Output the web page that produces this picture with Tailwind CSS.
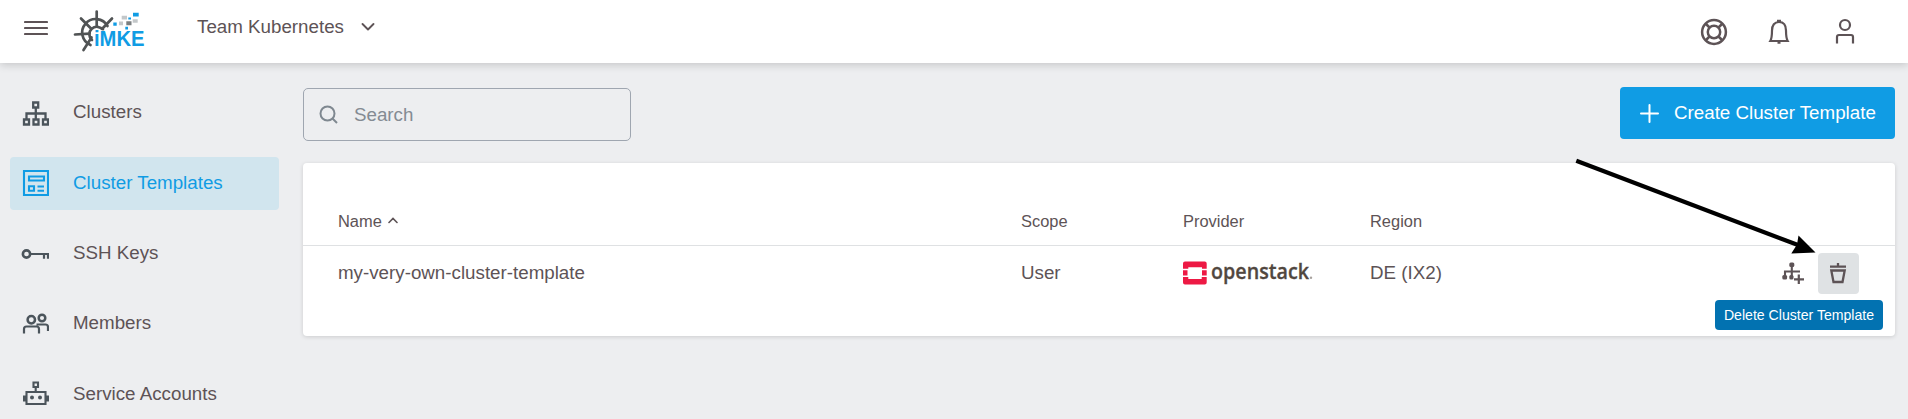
<!DOCTYPE html>
<html lang="en">
<head>
<meta charset="utf-8">
<title>Cluster Templates</title>
<script src="https://cdn.jsdelivr.net/npm/@tailwindcss/browser@4"></script>
</head>
<body class="relative h-[419px] overflow-hidden bg-[#edeef0] font-['Liberation_Sans',Arial,sans-serif] text-[18.75px] leading-[22px] text-[#5d5356]">
<header class="relative flex h-[63px] items-center bg-white shadow-[0_2px_8px_rgba(0,0,0,0.17)]">
  <button class="ml-6 h-[16px] w-6 -translate-y-[2px]" aria-label="Menu">
    <svg class="block -mt-[3px]" width="24" height="16" viewBox="0 0 24 16" stroke="#5d5356" stroke-width="2.200" stroke-linecap="round"><path d="M1 2h22M1 8h22M1 14h22"/></svg>
  </button>
  <svg class="ml-[22px] -translate-y-[1.500px]" width="80" height="60" viewBox="70 0 80 60" fill="none">
    <g stroke="#505354" stroke-width="2.700" stroke-linecap="round">
      <path d="M107.500 25.500A13.500 13.500 0 1 0 90.500 44.500"/>
      <path d="M103 29.500A7.500 7.500 0 1 0 92 39.500"/>
      <path d="M96.700 11v14.500M81 18l10 10M112 18l-9.500 10M75 34l14.500-.8M83.500 49.500l8-12.500"/>
    </g>
    <g fill="#109ce4"><path d="M133 12.300h5.700V16H133zM128.300 17h2.700v2h-2.700zM113.300 22h3.400v3.300h-3.400zM125.300 26.300h2.700V29h-2.700z"/></g>
    <path fill="#c3c7c9" d="M121.700 15.300h5.300V19h-5.300zM132.700 18.700h5v3.600h-5zM119 21h4v3.700h-4z"/>
    <path fill="#7b7f81" d="M126.300 20.700h5.200v4h-5.200z"/>
    <text x="94" y="45.800" fill="#109ce4" stroke="#fff" stroke-width="1.200" paint-order="stroke" font-family="Liberation Sans, sans-serif" font-weight="700" font-size="21.500" textLength="50.500" lengthAdjust="spacingAndGlyphs">iMKE</text>
  </svg>
  <button class="ml-[47px] flex -translate-y-[5px] items-center gap-[18px]">
    <span>Team Kubernetes</span>
    <svg class="-ml-px" width="14" height="9" viewBox="0 0 14 9" fill="none" stroke="#5d5356" stroke-width="1.900" stroke-linecap="round" stroke-linejoin="round"><path d="M1.500 2L7 7.500L12.500 2"/></svg>
  </button>
  <div class="mr-[51px] ml-auto flex items-center gap-[39px]">
    <svg width="28" height="28" viewBox="0 0 28 28" fill="none" stroke="#5d5356" stroke-width="2.500"><circle cx="14" cy="14" r="11.900"/><circle cx="14" cy="14" r="6.200"/><path d="M5.500 5.500l4 4M22.500 5.500l-4 4M5.500 22.500l4-4M22.500 22.500l-4-4"/></svg>
    <svg width="24" height="28" viewBox="0 0 24 28" fill="none" stroke="#5d5356" stroke-width="2.200"><path d="M3.300 23Q5 20 5 12.500C5 7 7.500 4 12 4s7 3 7 8.500Q19 20 20.700 23z"/><path d="M10 3h4M10.500 24.500h3" stroke-width="2.500"/></svg>
    <svg class="ml-[3px] -mt-[2px]" width="24" height="28" viewBox="0 0 24 28" fill="none" stroke="#5d5356" stroke-width="2.200"><circle cx="12" cy="8" r="5"/><path d="M4 26.500V20q0-2 2-2h12q2 0 2 2v6.500"/></svg>
  </div>
</header>

<div class="flex">
  <nav class="flex w-[279px] shrink-0 flex-col gap-[17.500px] pt-[23px] pl-[10px] text-[#5d5356]">
    <a class="flex h-[53px] items-center gap-[24px] pl-[12px]">
      <svg width="28" height="28" viewBox="0 0 28 28" class="mt-[2px] ml-[-1px]" fill="none" stroke="#4b545b" stroke-width="2.300"><path d="M12.200 2.500h5v5h-5zM3 19.500h5v5H3zM12.500 19.500h5v5h-5zM22 19.500h5v5h-5zM14.800 8v11M5.500 19v-5.500h19V19"/></svg>
      <span class="-translate-y-px">Clusters</span>
    </a>
    <a class="flex h-[53px] items-center gap-[24px] rounded-[4px] bg-[#d1e5ee] pl-[12px] text-[#109ce4]">
      <svg width="28" height="28" viewBox="0 0 28 28" class="ml-[-1px]" fill="none" stroke="#109ce4" stroke-width="2.100"><path d="M3 2h24v24H3z"/><path d="M8 7.500h15v4H8zM8 17.200h5v4.600H8zM16.500 17.500H23M16.500 21.800H23"/></svg>
      <span>Cluster Templates</span>
    </a>
    <a class="flex h-[53px] items-center gap-[24px] pl-[12px]">
      <svg width="28" height="28" viewBox="0 0 28 28" class="ml-[-1px]" fill="none" stroke="#4b545b" stroke-width="2.200"><circle cx="5.500" cy="14" r="3.600" stroke-width="2.600"/><path d="M9.500 14H28M27 14v4.800M23 14v4.800"/></svg>
      <span class="-translate-y-px">SSH Keys</span>
    </a>
    <a class="flex h-[53px] items-center gap-[24px] pl-[12px]">
      <svg width="28" height="28" viewBox="0 0 28 28" class="-mt-px ml-[-1px]" fill="none" stroke="#4b545b" stroke-width="2.500"><circle cx="10.300" cy="9.700" r="3.700"/><circle cx="21" cy="8" r="3.300"/><path d="M3 23.500V19q0-2.500 2.500-2.500h10q2.500 0 2.500 2.500v4.500M15.500 14.500h9q2.500 0 2.500 2.500v4" stroke-width="2.200"/></svg>
      <span class="-translate-y-px">Members</span>
    </a>
    <a class="flex h-[53px] items-center gap-[24px] pl-[12px]">
      <svg width="28" height="28" viewBox="0 0 28 28" class="-mt-px ml-[-1px]" fill="none" stroke="#4b545b" stroke-width="2.100"><path d="M12.500 2.500h4.500v4.500h-4.500zM14.700 7v5M5.500 12h19v12h-19z"/><path d="M3.500 15.500v6M26.500 15.500v6" stroke-width="3"/><g fill="#4b545b" stroke="none"><circle cx="11" cy="17.500" r="2"/><circle cx="19" cy="17.500" r="2"/></g></svg>
      <span class="-translate-y-px">Service Accounts</span>
    </a>
  </nav>

  <main class="relative ml-[24px] w-[1592px] pt-[24px]">
    <div class="flex items-start justify-between">
      <label class="mt-[1px] flex h-[53px] w-[328px] items-center gap-[16px] rounded-[5px] border border-[#9fa6b0] pl-[15px] text-[#848b93]">
        <svg width="19" height="19" viewBox="0 0 19 19" fill="none" stroke="#7f8890" stroke-width="2"><circle cx="8.500" cy="8.500" r="7"/><path d="M13.500 13.500l4.500 4.500"/></svg>
        <span>Search</span>
      </label>
      <button class="flex h-[52px] w-[275px] items-center gap-[15px] rounded-[4px] bg-[#109ce4] pl-[20px] text-white">
        <svg width="19" height="19" viewBox="0 0 19 19" stroke="#fff" stroke-width="2" stroke-linecap="round"><path d="M9.500 1v17M1 9.500h17"/></svg>
        <span>Create Cluster Template</span>
      </button>
    </div>

    <section class="mt-[22px] h-[173px] rounded-[4px] bg-white shadow-[0_1px_4px_rgba(0,0,0,0.14)]">
      <div class="grid h-[83px] grid-cols-[683px_162px_187px_1fr] items-start border-b border-[#dfe1e3] pt-[47px] pl-[35px] text-[16.450px]">
        <span class="flex h-[22px] items-center gap-[6px]">Name
          <svg class="-mt-px" width="10" height="7" viewBox="0 0 10 7" fill="none" stroke="#5d5356" stroke-width="1.600" stroke-linecap="round"><path d="M1 5.500l4-4 4 4"/></svg>
        </span>
        <span>Scope</span><span>Provider</span><span>Region</span>
      </div>
      <div class="grid h-[54px] grid-cols-[683px_162px_187px_1fr] items-center pl-[35px]">
        <span>my-very-own-cluster-template</span>
        <span>User</span>
        <svg width="131" height="30" viewBox="0 0 131 30">
          <path fill="#ed1944" d="M2 3.500h19.700q2 0 2 2v5.300h-4.700V9.300H5.300v1.500H0V5.500q0-2 2-2zM0 12.300h4.500v5.200H0zM19 12.300h4.700v5.200H19zM0 19h5.300v2h13.400v-2h5v5.500q0 2-2 2H2q-2 0-2-2z"/>
          <text x="28" y="21" fill="#51473f" stroke="#51473f" stroke-width="0.300" font-family="Open Sans, sans-serif" font-weight="600" font-size="21" textLength="98" lengthAdjust="spacingAndGlyphs">openstack</text>
          <circle cx="128" cy="19.800" r="1.200" fill="#a8a29e"/>
        </svg>
        <span>DE (IX2)</span>
      </div>
    </section>

    <div class="absolute top-[190px] left-[1469px] flex items-center">
      <button class="flex h-[41px] w-[41px] items-center justify-center" aria-label="Create from template">
        <svg class="-mt-[2px]" width="24" height="24" viewBox="0 0 24 24" fill="none" stroke="#5d5356" stroke-width="2.100"><path d="M10.800 4v14M4 16v-5.500H19"/><g fill="#5d5356" stroke="none"><rect x="8.300" y="1.500" width="5" height="4.500" rx="1.500"/><rect x="1.300" y="14" width="4.800" height="4.500" rx="1.500"/><rect x="8.300" y="14" width="4.200" height="4.500" rx="1.500"/></g><path d="M17.800 13.500v9.500M13 18.300h10" stroke-width="2.200"/></svg>
      </button>
      <button class="ml-[5px] flex h-[41px] w-[41px] items-center justify-center rounded-[4px] bg-[#dfe2e4]" aria-label="Delete">
        <svg class="-mt-[2px] -ml-px" width="20" height="24" viewBox="0 0 20 24" fill="none" stroke="#5d5356" stroke-width="2.300"><path d="M2 5.700h16M10 2v3.500M3.300 9.500h13.400l-2.200 11.500H5.500z"/></svg>
      </button>
    </div>
    <div class="absolute top-[237px] left-[1412px] flex h-[30px] w-[168px] items-center justify-center rounded-[4px] bg-[#0272b1] text-[14.100px] text-white">Delete Cluster Template</div>
    <svg class="absolute top-[90px] left-[1266px]" width="260" height="110" viewBox="1569 153 260 110"><path d="M1576.300 160.700L1800 245.800" stroke="#000" stroke-width="4.200"/><path d="M1815.500 252.500L1798.500 235.500L1797 244.500L1791.300 253.500z"/></svg>
  </main>
</div>
</body>
</html>
